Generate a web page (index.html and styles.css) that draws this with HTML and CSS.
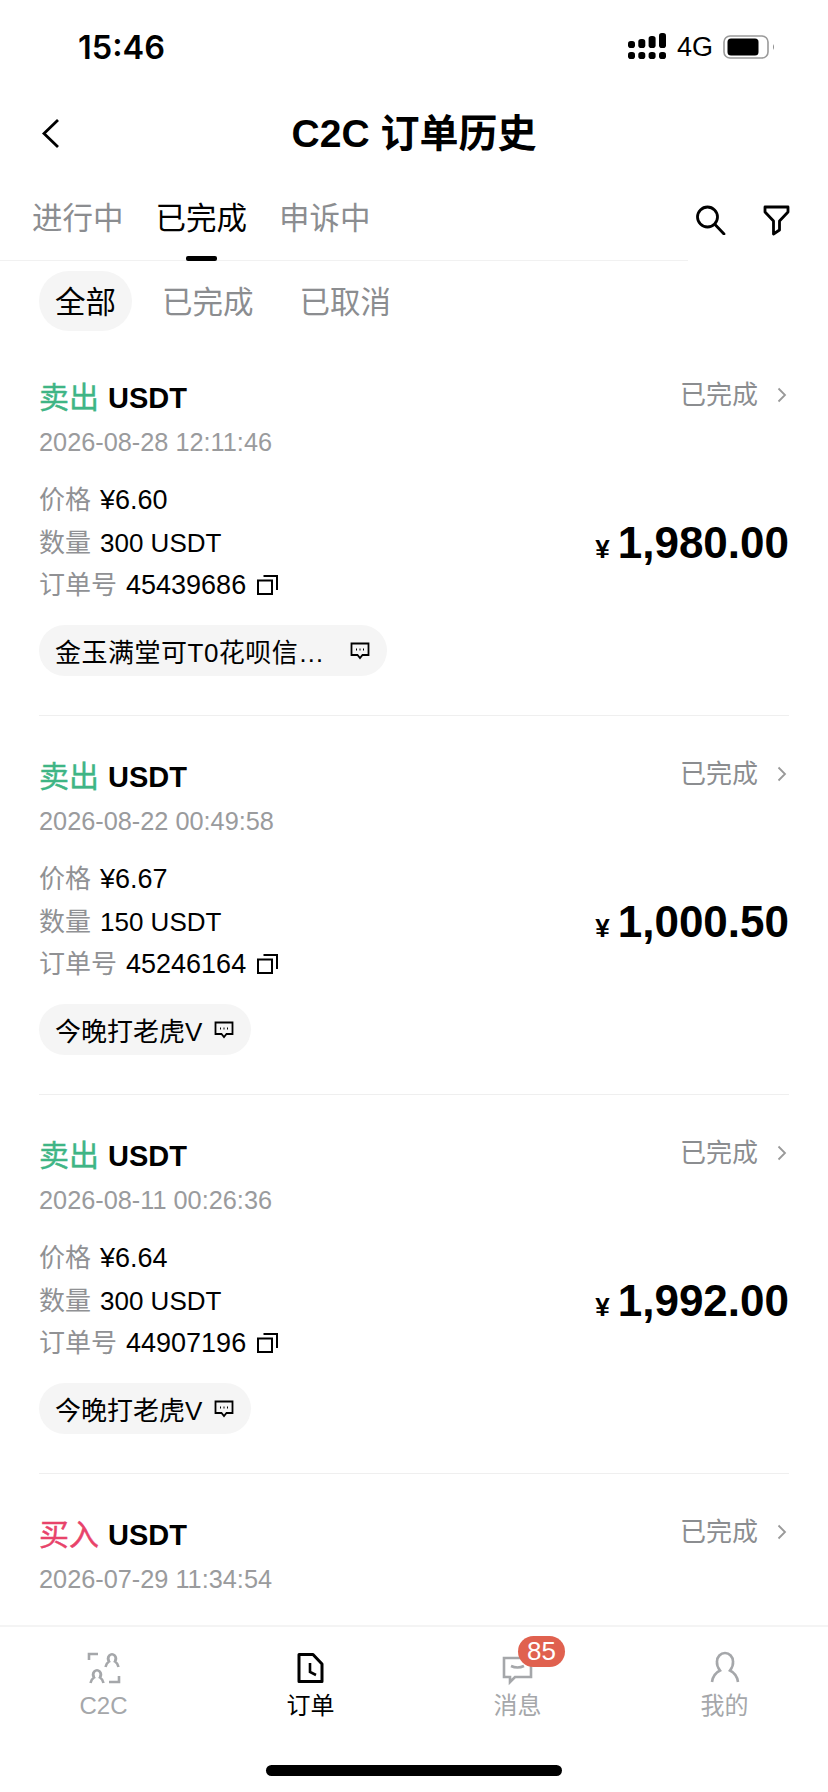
FILE: index.html
```html
<!DOCTYPE html>
<html lang="zh-CN">
<head>
<meta charset="utf-8">
<title>C2C 订单历史</title>
<link rel="stylesheet" href="styles.css">
</head>
<body>
<div class="app">
  <header class="status">
    <span class="time">15:46</span>
    <div class="status-right">
      <svg class="signal" width="38" height="28" viewBox="0 0 38 28" fill="#000">
        <rect x="0" y="8" width="7" height="7" rx="2.800"/><rect x="0" y="19" width="7" height="7" rx="2.800"/>
        <rect x="10.300" y="6" width="7" height="9" rx="2.800"/><rect x="10.300" y="19" width="7" height="7" rx="2.800"/>
        <rect x="20.600" y="3" width="7" height="12" rx="2.800"/><rect x="20.600" y="19" width="7" height="7" rx="2.800"/>
        <rect x="31" y="0" width="7" height="15" rx="2.800"/><rect x="31" y="19" width="7" height="7" rx="2.800"/>
      </svg>
      <span class="net">4G</span>
      <svg class="battery" width="53" height="24" viewBox="0 0 53 24">
        <rect x="1" y="1" width="44" height="22" rx="6" fill="none" stroke="#9a9a9a" stroke-width="1.600"/>
        <rect x="4.500" y="3.500" width="31" height="17" rx="3.500" fill="#000"/>
        <path d="M50 9 Q52 12 50 15Z" fill="#8a8a8a"/>
      </svg>
    </div>
  </header>

  <nav class="nav">
    <svg class="back" width="20" height="32" viewBox="0 0 20 32"><path d="M17 2 L3 15.500 L17 29" fill="none" stroke="#000" stroke-width="2.800"/></svg>
    <h1 class="title">C2C 订单历史</h1>
  </nav>

  <div class="tabs">
    <div class="tab-list">
      <span class="tab">进行中</span>
      <span class="tab tab-on">已完成</span>
      <span class="tab">申诉中</span>
    </div>
    <div class="tab-actions">
      <svg width="30" height="30" viewBox="0 0 30 30" fill="none" stroke="#000" stroke-width="2.800" stroke-linecap="round"><circle cx="11.500" cy="12" r="10"/><path d="M19.500 20 L28 29"/></svg>
      <svg width="30" height="32" viewBox="0 0 30 32" fill="none" stroke="#000" stroke-width="2.800" stroke-linejoin="round"><path d="M4 3 H27 V8 L18.500 17 V26 L12.500 30 V17 L4 8Z"/></svg>
    </div>
  </div>

  <div class="filters">
    <span class="filter filter-on">全部</span>
    <span class="filter">已完成</span>
    <span class="filter">已取消</span>
  </div>

  <main class="list">
    <article class="card">
      <div class="head">
        <div class="kind"><span class="sell">卖出</span> USDT</div>
        <div class="state">已完成<svg class="chev" width="10" height="16" viewBox="0 0 10 16"><path d="M1.500 1.500 L8 8 L1.500 14.500" fill="none" stroke="#999" stroke-width="1.800"/></svg></div>
      </div>
      <div class="date">2026-08-28 12:11:46</div>
      <div class="body">
        <div class="rows">
          <div class="row"><span class="lbl">价格</span><span class="num">¥6.60</span></div>
          <div class="row"><span class="lbl">数量</span>300 USDT</div>
          <div class="row"><span class="lbl">订单号</span><span class="num">45439686</span><svg class="copy" width="21" height="20" viewBox="0 0 21 20" fill="none" stroke="#000" stroke-width="2"><rect x="1" y="5.500" width="14" height="13.500"/><path d="M6.500 1 H20 V15"/></svg></div>
        </div>
        <div class="amount"><span class="yen">¥</span>1,980.00</div>
      </div>
      <div class="chip chip-wide"><span class="chip-text">金玉满堂可T0花呗信…</span><svg class="chat" width="20" height="18" viewBox="0 0 20 18"><path d="M1.500 1.500 H18.500 V13 H12.500 L10 16 L7.500 13 H1.500Z" fill="none" stroke="#000" stroke-width="1.800"/><path d="M6 7.500 H7 M9.500 7.500 H10.500 M13 7.500 H14" stroke="#000" stroke-width="2"/></svg></div>
    </article>

    <article class="card">
      <div class="head">
        <div class="kind"><span class="sell">卖出</span> USDT</div>
        <div class="state">已完成<svg class="chev" width="10" height="16" viewBox="0 0 10 16"><path d="M1.500 1.500 L8 8 L1.500 14.500" fill="none" stroke="#999" stroke-width="1.800"/></svg></div>
      </div>
      <div class="date">2026-08-22 00:49:58</div>
      <div class="body">
        <div class="rows">
          <div class="row"><span class="lbl">价格</span><span class="num">¥6.67</span></div>
          <div class="row"><span class="lbl">数量</span>150 USDT</div>
          <div class="row"><span class="lbl">订单号</span><span class="num">45246164</span><svg class="copy" width="21" height="20" viewBox="0 0 21 20" fill="none" stroke="#000" stroke-width="2"><rect x="1" y="5.500" width="14" height="13.500"/><path d="M6.500 1 H20 V15"/></svg></div>
        </div>
        <div class="amount"><span class="yen">¥</span>1,000.50</div>
      </div>
      <div class="chip"><span class="chip-text">今晚打老虎V</span><svg class="chat" width="20" height="18" viewBox="0 0 20 18"><path d="M1.500 1.500 H18.500 V13 H12.500 L10 16 L7.500 13 H1.500Z" fill="none" stroke="#000" stroke-width="1.800"/><path d="M6 7.500 H7 M9.500 7.500 H10.500 M13 7.500 H14" stroke="#000" stroke-width="2"/></svg></div>
    </article>

    <article class="card">
      <div class="head">
        <div class="kind"><span class="sell">卖出</span> USDT</div>
        <div class="state">已完成<svg class="chev" width="10" height="16" viewBox="0 0 10 16"><path d="M1.500 1.500 L8 8 L1.500 14.500" fill="none" stroke="#999" stroke-width="1.800"/></svg></div>
      </div>
      <div class="date">2026-08-11 00:26:36</div>
      <div class="body">
        <div class="rows">
          <div class="row"><span class="lbl">价格</span><span class="num">¥6.64</span></div>
          <div class="row"><span class="lbl">数量</span>300 USDT</div>
          <div class="row"><span class="lbl">订单号</span><span class="num">44907196</span><svg class="copy" width="21" height="20" viewBox="0 0 21 20" fill="none" stroke="#000" stroke-width="2"><rect x="1" y="5.500" width="14" height="13.500"/><path d="M6.500 1 H20 V15"/></svg></div>
        </div>
        <div class="amount"><span class="yen">¥</span>1,992.00</div>
      </div>
      <div class="chip"><span class="chip-text">今晚打老虎V</span><svg class="chat" width="20" height="18" viewBox="0 0 20 18"><path d="M1.500 1.500 H18.500 V13 H12.500 L10 16 L7.500 13 H1.500Z" fill="none" stroke="#000" stroke-width="1.800"/><path d="M6 7.500 H7 M9.500 7.500 H10.500 M13 7.500 H14" stroke="#000" stroke-width="2"/></svg></div>
    </article>

    <article class="card">
      <div class="head">
        <div class="kind"><span class="buy">买入</span> USDT</div>
        <div class="state">已完成<svg class="chev" width="10" height="16" viewBox="0 0 10 16"><path d="M1.500 1.500 L8 8 L1.500 14.500" fill="none" stroke="#999" stroke-width="1.800"/></svg></div>
      </div>
      <div class="date">2026-07-29 11:34:54</div>
    </article>
  </main>

  <footer class="bar">
    <div class="bar-items">
      <div class="item">
        <svg width="40" height="40" viewBox="0 0 40 40" fill="none" stroke="#a5a7aa" stroke-width="2.600"><path d="M5 12 V6 H14"/><path d="M25 34 H35 V28"/><path d="M21.500 19 Q22.500 15 25 13.500 A3.800 4.500 0 1 1 31 13.500 Q33.500 15 34.500 19"/><path d="M6.500 35 Q7.500 31 10 29.500 A3.800 4.500 0 1 1 16 29.500 Q18.500 31 19.500 35"/></svg>
        <span class="label">C2C</span>
      </div>
      <div class="item item-on">
        <svg width="40" height="40" viewBox="0 0 40 40" fill="none" stroke="#000" stroke-width="3"><path d="M8 6.500 H22 L31 16 V33.500 H8Z" stroke-linejoin="round"/><path d="M19 15 V24 L25 27" stroke-width="2.600"/></svg>
        <span class="label">订单</span>
      </div>
      <div class="item">
        <svg width="40" height="40" viewBox="0 0 40 40" fill="none" stroke="#a5a7aa" stroke-width="2.600"><path d="M6 10 H33 V29 H17 L12 34 V29 H6Z"/><path d="M13 18 Q19.500 21 26 18"/></svg>
        <span class="label">消息</span>
        <span class="badge">85</span>
      </div>
      <div class="item">
        <svg width="40" height="40" viewBox="0 0 40 40" fill="none" stroke="#a5a7aa" stroke-width="2.600"><path d="M7 34 Q8 26 15 22.500 Q11.500 18 12 13.500 A8 8.500 0 0 1 28 13.500 Q28.500 18 25 22.500 Q32 26 33 34"/></svg>
        <span class="label">我的</span>
      </div>
    </div>
    <div class="home"></div>
  </footer>
</div>
</body>
</html>
```
FILE: styles.css
```css
* { box-sizing: border-box; }
html, body { margin: 0; padding: 0; background: #fff; }
body {
  width: 828px;
  height: 1792px;
  overflow: hidden;
  color: #000;
  font-family: "Liberation Sans", "Noto Sans CJK SC", sans-serif;
}
.app { height: 1792px; display: flex; flex-direction: column; }

.status {
  height: 90px;
  flex: none;
  display: flex;
  justify-content: space-between;
  align-items: center;
  padding: 4px 52px 0 78px;
}
.time { font-family: Inter, "Liberation Sans", sans-serif; font-size: 32.500px; font-weight: 600; }
.status-right { display: flex; align-items: center; }
.signal { margin-right: 11px; }
.net { font-size: 27px; margin-right: 9px; width: 37px; }

.nav {
  height: 88px;
  flex: none;
  position: relative;
  display: flex;
  align-items: center;
  justify-content: center;
}
.back { position: absolute; left: 41px; top: 28px; }
.title { margin: 0; font-size: 39px; font-weight: 700; line-height: 88px; }

.tabs { height: 83px; flex: none; display: flex; align-items: center; }
.tab-list {
  width: 688px;
  height: 83px;
  flex: none;
  display: flex;
  gap: 32px;
  padding: 20px 0 0 32px;
  border-bottom: 1px solid #f1f1f1;
}
.tab { position: relative; font-size: 30.500px; line-height: 40px; height: 40px; color: #8b8d90; }
.tab-on { color: #000; }
.tab-on::after {
  content: "";
  position: absolute;
  left: 30px;
  top: 58px;
  width: 31px;
  height: 5px;
  border-radius: 2px;
  background: #000;
}
.tab-actions { display: flex; align-items: center; gap: 35px; padding-left: 8px; }

.filters { flex: none; display: flex; gap: 14px; margin-top: 10px; padding-left: 39px; }
.filter {
  height: 60px;
  padding: 1px 16px 0;
  border-radius: 30px;
  font-size: 30.500px;
  line-height: 60px;
  color: #8b8d90;
}
.filter-on { background: #f5f5f5; color: #000; }

.list { flex: 1; min-height: 0; overflow: hidden; padding: 6px 39px 0; }
.card { padding: 41px 0 39px; border-bottom: 1px solid #efefef; }
.head { display: flex; justify-content: space-between; align-items: flex-start; height: 40px; }
.kind { font-size: 29px; font-weight: 700; line-height: 40px; }
.sell { color: #3fb585; font-size: 30px; font-weight: 400; margin-right: 1px; -webkit-text-stroke: 0.4px #3fb585; }
.buy { color: #e8436a; font-size: 30px; font-weight: 400; margin-right: 1px; -webkit-text-stroke: 0.4px #e8436a; }
.state {
  display: flex;
  align-items: center;
  gap: 19px;
  margin: -1px 2px 0 0;
  font-size: 26px;
  line-height: 36px;
  color: #8b8d90;
}
.date { margin-top: 7px; font-size: 25.300px; line-height: 34px; color: #9a9b9d; }
.body { display: flex; justify-content: space-between; align-items: center; margin-top: 20px; }
.row { display: flex; align-items: center; font-size: 26px; line-height: 42.500px; height: 42.500px; }
.lbl { color: #909194; margin-right: 9px; }
.num { font-size: 27px; }
.copy { margin-left: 11px; }
.amount { padding-top: 6px; font-size: 44px; font-weight: 700; line-height: 50px; }
.yen { font-size: 26px; margin-right: 8px; }
.chip {
  display: inline-flex;
  align-items: center;
  gap: 12px;
  height: 51px;
  margin-top: 18.500px;
  padding: 0 17px 0 16px;
  border-radius: 26px;
  background: #f5f5f5;
  font-size: 26px;
  vertical-align: top;
}
.chip-text { white-space: nowrap; }
.chip-wide .chip-text { width: 283px; letter-spacing: 0.500px; }
.chat { flex: none; }

.bar { flex: none; border-top: 2px solid #f4f4f4; }
.bar-items { display: flex; padding-top: 21px; }
.item {
  position: relative;
  width: 207px;
  display: flex;
  flex-direction: column;
  align-items: center;
  color: #a5a7aa;
}
.item-on { color: #000; }
.label { margin-top: 2px; font-size: 24px; line-height: 32px; }
.badge {
  position: absolute;
  left: 104px;
  top: -12px;
  width: 47px;
  height: 31px;
  border-radius: 16px;
  background: #e0614f;
  color: #fff;
  font-size: 26px;
  line-height: 31px;
  text-align: center;
}
.home {
  width: 296px;
  height: 11px;
  margin: 43px auto 16px;
  border-radius: 6px;
  background: #000;
}
```
